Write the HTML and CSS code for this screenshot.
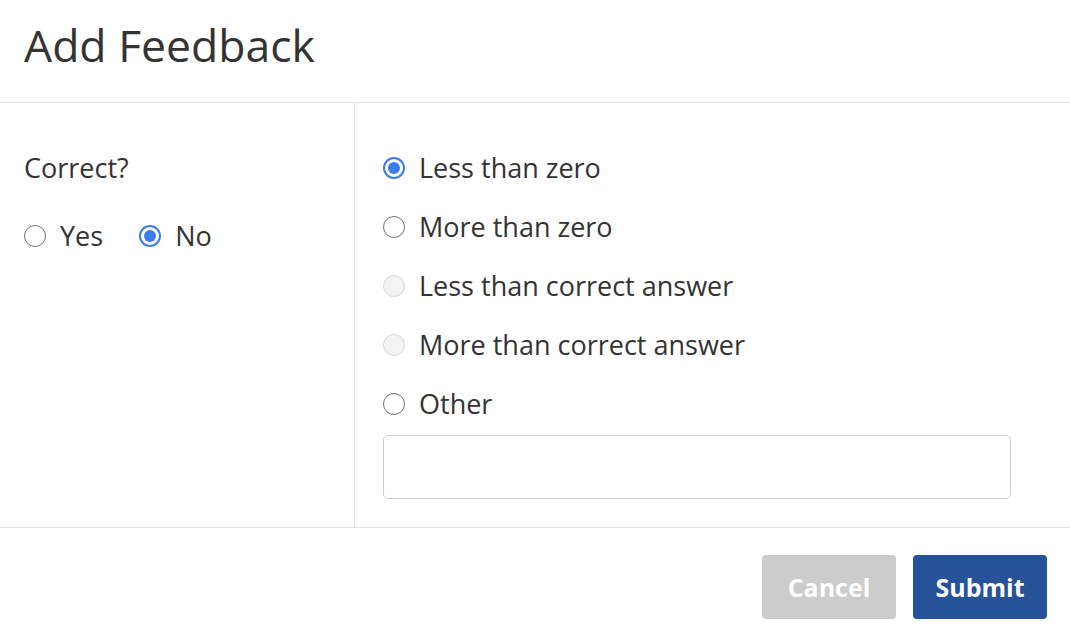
FILE: index.html
```html
<!DOCTYPE html>
<html lang="en">
<head>
<meta charset="utf-8">
<title>Add Feedback</title>
<link rel="stylesheet" href="styles.css">
</head>
<body>
<div class="modal">
  <header class="modal-header">
    <h1 class="title">Add Feedback</h1>
  </header>
  <section class="modal-body">
    <div class="col-left">
      <div class="question">Correct?</div>
      <div class="yesno">
        <label class="opt"><span class="radio"></span><span class="label">Yes</span></label>
        <label class="opt"><span class="radio checked"></span><span class="label">No</span></label>
      </div>
    </div>
    <div class="col-right">
      <label class="opt row"><span class="radio checked"></span><span class="label">Less than zero</span></label>
      <label class="opt row"><span class="radio"></span><span class="label">More than zero</span></label>
      <label class="opt row"><span class="radio disabled"></span><span class="label">Less than correct answer</span></label>
      <label class="opt row"><span class="radio disabled"></span><span class="label">More than correct answer</span></label>
      <label class="opt row last"><span class="radio"></span><span class="label">Other</span></label>
      <div class="textbox"></div>
    </div>
  </section>
  <footer class="modal-footer">
    <button class="btn btn-cancel">Cancel</button>
    <button class="btn btn-submit">Submit</button>
  </footer>
</div>
</body>
</html>
```

FILE: styles.css
```css
html, body {
  margin: 0;
  padding: 0;
  background: #fff;
}
body {
  font-family: "Open Sans", Lato, "Liberation Sans", sans-serif;
  color: #333;
}
.modal {
  width: 1070px;
  height: 644px;
  display: flex;
  flex-direction: column;
}
.modal-header {
  height: 102px;
  border-bottom: 1px solid #e3e3e3;
  box-sizing: content-box;
  display: flex;
  align-items: flex-start;
  padding-left: 24px;
}
.title {
  margin: 0;
  font-weight: 400;
  font-size: 44.5px;
  line-height: 1;
  padding-top: 23px;
}
.modal-body {
  display: flex;
  height: 424px;
  border-bottom: 1px solid #e3e3e3;
}
.col-left {
  width: 355px;
  border-right: 1px solid #e3e3e3;
  padding: 50px 0 0 24px;
  box-sizing: border-box;
}
.question {
  font-size: 27px;
  height: 30px;
  line-height: 30px;
}
.yesno {
  display: flex;
  gap: 36px;
  margin-top: 38px;
}
.opt {
  display: flex;
  align-items: center;
  font-size: 27px;
  line-height: 30px;
}
.label {
  margin-left: 14px;
}
.col-right {
  flex: 1;
  padding: 50px 0 0 28px;
  display: flex;
  flex-direction: column;
}
.row {
  height: 30px;
  margin-bottom: 29px;
}
.row.last {
  margin-bottom: 16px;
}
.radio {
  width: 22px;
  height: 22px;
  box-sizing: border-box;
  border-radius: 50%;
  border: 1.5px solid #6f6f6f;
  background: #fff;
  flex: none;
  position: relative;
}
.radio.checked {
  border: 2px solid #3b7cf0;
}
.radio.checked::after {
  content: "";
  position: absolute;
  left: 3px;
  top: 3px;
  width: 12px;
  height: 12px;
  border-radius: 50%;
  background: #3b7cf0;
}
.radio.disabled {
  border-color: #d6d6d6;
  background: #f3f3f3;
}
.textbox {
  width: 628px;
  height: 64px;
  box-sizing: border-box;
  border: 1px solid #cfcfcf;
  border-radius: 5px;
}
.modal-footer {
  flex: 1;
  display: flex;
  justify-content: flex-end;
  align-items: flex-start;
  gap: 17px;
  padding: 27px 23px 0 0;
}
.btn {
  width: 134px;
  height: 64px;
  border: none;
  border-radius: 4px;
  color: #fff;
  font-family: "Open Sans", Lato, "Liberation Sans", sans-serif;
  font-weight: 700;
  font-size: 25px;
  padding: 0;
}
.btn-cancel {
  background: #cccccc;
}
.btn-submit {
  background: #26529a;
}
```
